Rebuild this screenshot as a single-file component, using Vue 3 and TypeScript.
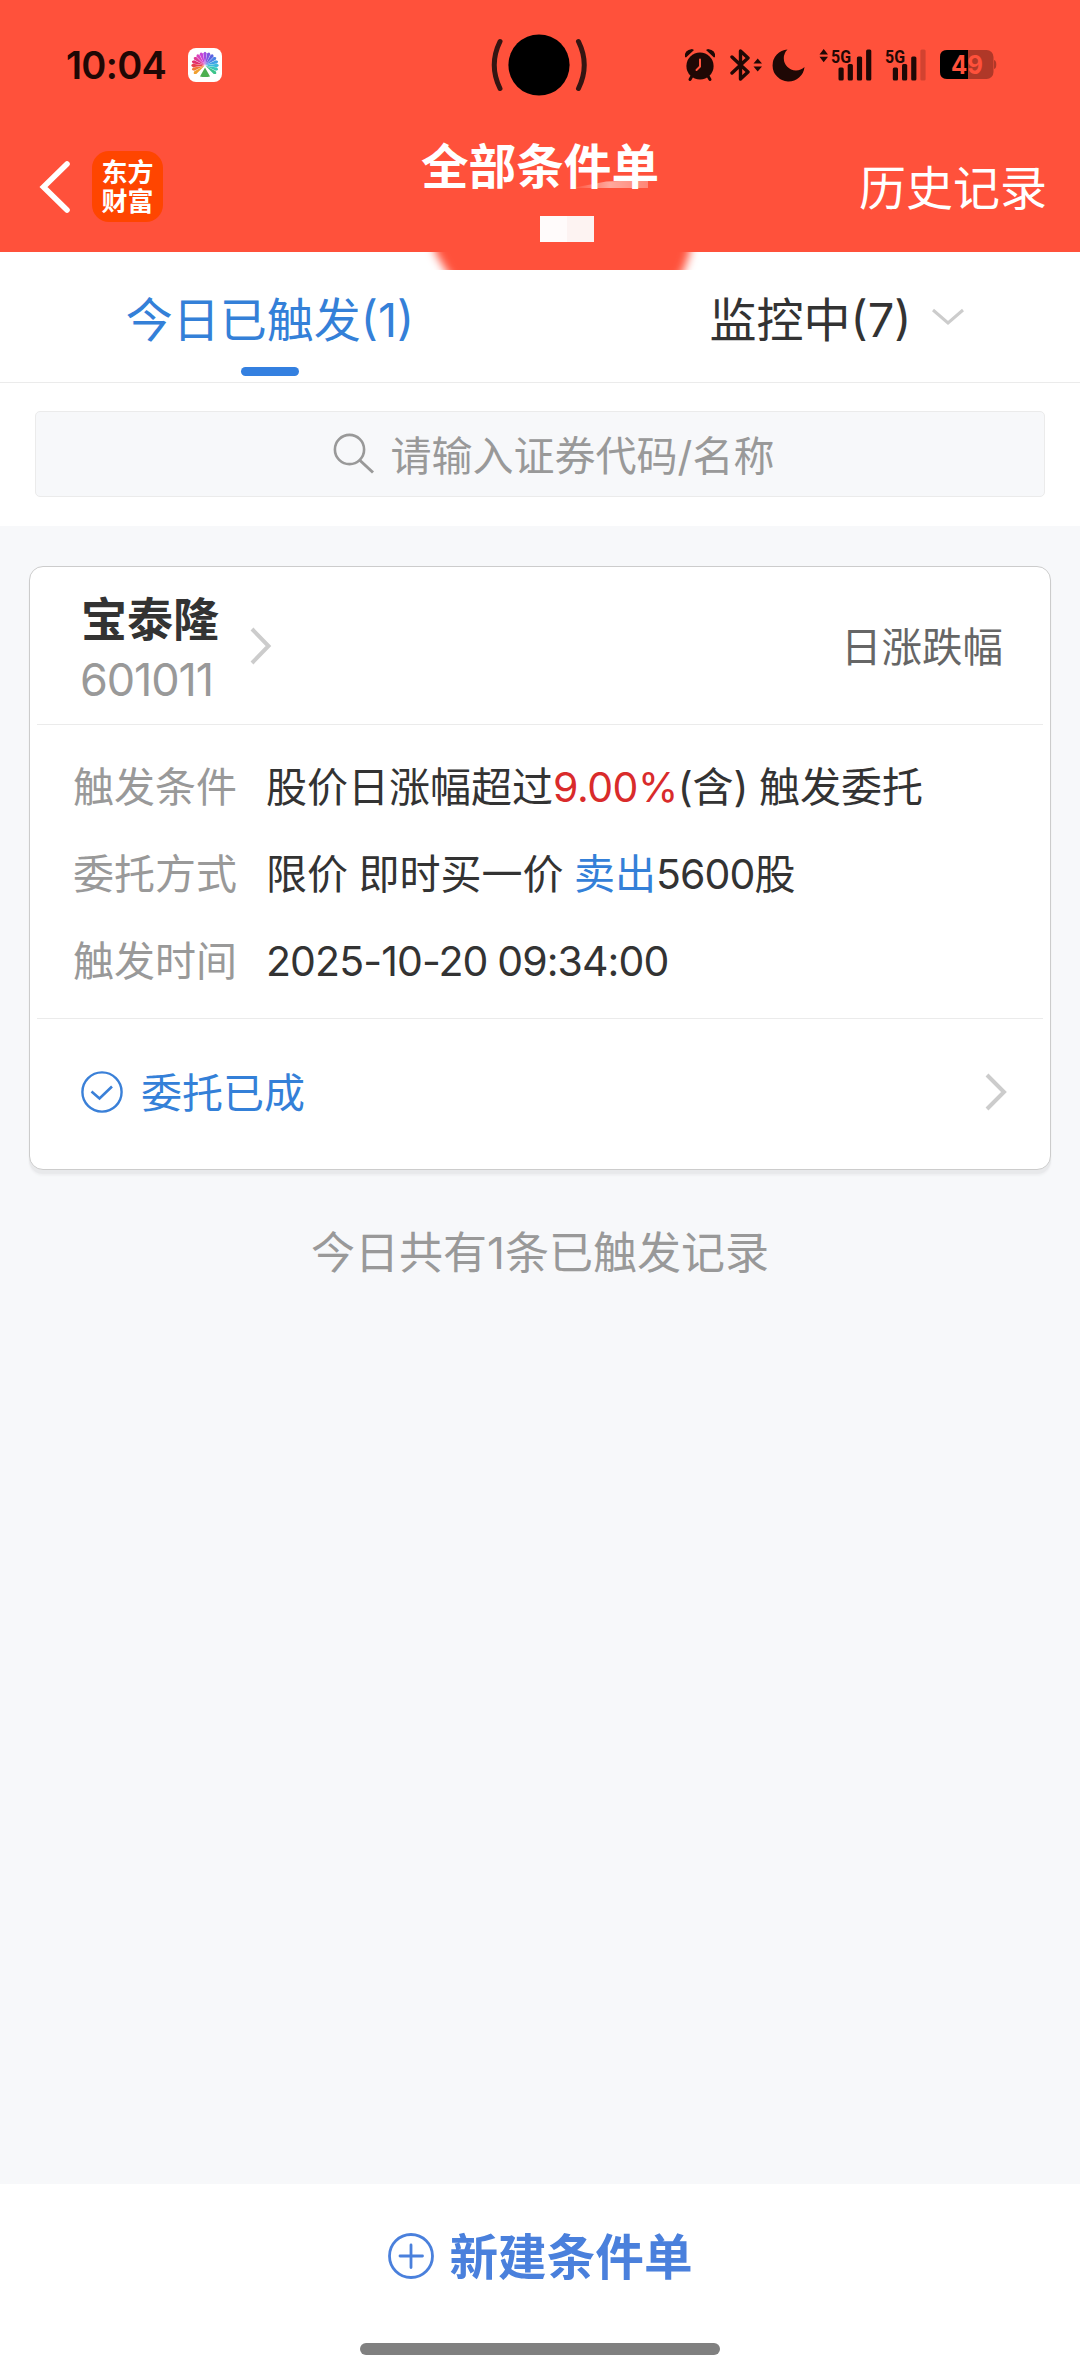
<script setup lang="ts">
interface Segment {
  text: string
  tone?: 'red' | 'blue' | 'num' | 'paren'
}
interface DetailRow {
  label: string
  segments: Segment[]
}

const rows: DetailRow[] = [
  {
    label: '触发条件',
    segments: [
      { text: '股价日涨幅超过' },
      { text: '9.00%', tone: 'red' },
      { text: '(含) 触发委托', tone: 'paren' },
    ],
  },
  {
    label: '委托方式',
    segments: [
      { text: '限价 即时买一价 ' },
      { text: '卖出', tone: 'blue' },
      { text: '5600', tone: 'num' },
      { text: '股' },
    ],
  },
  { label: '触发时间', segments: [{ text: '2025-10-20 09:34:00', tone: 'num' }] },
]

const petalColors = [
  '#f0a030', '#f07a38', '#e8404c', '#e0306c', '#dd3a96', '#d943bd', '#c744d6',
  '#a44be0', '#8054e0', '#5b62e0', '#4b84e6', '#3fa2e6', '#3bbcdc', '#38c8b8', '#3cc48a',
]
const petals = petalColors.map((color, i) => ({ color, angle: -126 + i * 18 }))

const signalBars = [
  { x: 0, y: 18.5 },
  { x: 9.2, y: 15 },
  { x: 18.4, y: 7.5 },
  { x: 27.6, y: 0.5 },
]
</script>

<template>
  <div class="screen">
    <header class="header">
      <div class="status">
        <span class="clock">10:04</span>
        <svg class="fan" width="34" height="34" viewBox="0 0 34 34">
          <rect width="34" height="34" rx="8" fill="#fff" />
          <path
            v-for="p in petals"
            :key="p.angle"
            d="M17 17 L15.3 5.500 Q17 2 18.700 5.500 Z"
            :fill="p.color"
            :transform="`rotate(${p.angle} 17 17.5)`"
          />
          <path d="M17 19.5 L22 28.5 Q17 29.6 12 28.5 Z" fill="#4caf50" />
        </svg>
        <svg class="camera" width="98" height="64" viewBox="0 0 98 64">
          <circle cx="49" cy="32" r="30.6" fill="#000" />
          <path d="M10 8.5 Q-1.5 32 10 55.5 M88.500 8.500 Q100 32 88.500 55.500" fill="none" stroke="#341512" stroke-width="5" stroke-linecap="round" />
        </svg>
        <div class="indicators">
          <svg class="alarm" width="32" height="34" viewBox="0 0 32 34">
            <circle cx="16" cy="18" r="13.6" fill="#1f0805" />
            <path d="M1 9 Q0 2 8 1 L10 2 L2 9.500 Z M31 9 Q32 2 24 1 L22 2 L30 9.500 Z" fill="#1f0805" />
            <path d="M8 28 L6 31.500 M24 28 L26 31.500" stroke="#1f0805" stroke-width="3" stroke-linecap="round" />
            <path d="M16 11.500 V18.500 L12.500 22" fill="none" stroke="#ff513b" stroke-width="2" stroke-linecap="round" />
          </svg>
          <svg class="bt" width="32" height="34" viewBox="0 0 32 34">
            <path d="M2 9 L18 24 L10.500 31 V3 L18 10 L2 25" fill="none" stroke="#1f0805" stroke-width="3.400" stroke-linejoin="round" stroke-linecap="round" />
            <path d="M23.500 15.500 L27.700 10.500 L32 15.500 Z M23.500 18.500 L27.700 23.500 L32 18.500 Z" fill="#1f0805" />
          </svg>
          <svg class="moon" width="34" height="34" viewBox="0 0 34 34">
            <path d="M15.500 1.500 A16 16 0 1 0 32.500 19 A12 12 0 0 1 15.500 1.500 Z" fill="#1f0805" />
          </svg>
          <svg class="sig1" width="54" height="46" viewBox="0 -6 54 46">
            <path d="M0.500 6.500 L4.700 1 L9 6.500 Z M0.500 8.800 L4.700 14.200 L9 8.800 Z" fill="#1f0805" />
            <text x="12" y="14.500" class="net" textLength="20" lengthAdjust="spacingAndGlyphs">5G</text>
            <rect v-for="b in signalBars" :key="b.x" :x="b.x + 19.500" :y="b.y + 1" width="5.200" :height="31.500 - b.y" rx="1.500" fill="#1f0805" />
          </svg>
          <svg class="sig2" width="44" height="46" viewBox="-2 -6 44 46">
            <text x="0" y="14.500" class="net" textLength="20" lengthAdjust="spacingAndGlyphs">5G</text>
            <rect v-for="(b, i) in signalBars" :key="b.x" :x="b.x + 7.800" :y="b.y + 1" width="5.200" :height="31.500 - b.y" rx="1.500" fill="#1f0805" :opacity="i === 3 ? 0.2 : 1" />
          </svg>
          <svg class="battery" width="57" height="30" viewBox="0 0 57 30">
            <rect x="0" y="0" width="53.500" height="29" rx="7" fill="#b03828" />
            <path d="M54 10 Q56.300 10.500 56.300 14.500 Q56.300 18.500 54 19 Z" fill="#b03828" />
            <path d="M7 0 H28 V29 H7 Q0 29 0 22 V7 Q0 0 7 0 Z" fill="#000" />
            <text x="11" y="24.200" class="pct" textLength="32" lengthAdjust="spacingAndGlyphs">49</text>
          </svg>
        </div>
      </div>

      <div class="nav">
        <svg class="back" width="34" height="56" viewBox="0 0 34 56">
          <path d="M29 5 L5.500 28 L29 51" fill="none" stroke="#fff" stroke-width="5.600" stroke-linecap="round" stroke-linejoin="miter" />
        </svg>
        <div class="brand"><span>东方</span><span>财富</span></div>
        <h1 class="title">全部条件单</h1>
        <span class="history">历史记录</span>
      </div>

      <div class="smear"></div>
      <div class="mask"><i></i><i></i></div>
      <div class="drip"><i></i></div>
    </header>

    <nav class="tabs">
      <div class="tab active">
        <span>今日已触发<b>(1)</b></span>
      </div>
      <div class="tab second">
        <span>监控中<b>(7)</b></span>
        <svg width="34" height="20" viewBox="0 0 34 20">
          <path d="M2 2 L17 15 L32 2" fill="none" stroke="#ccc" stroke-width="3" />
        </svg>
      </div>
    </nav>

    <div class="search-area">
      <div class="search">
        <svg width="44" height="44" viewBox="0 0 44 44">
          <circle cx="17.500" cy="17.500" r="14.600" fill="none" stroke="#999" stroke-width="2.600" />
          <path d="M27.500 28 L41 40.500" stroke="#999" stroke-width="3" />
        </svg>
        <span>请输入证券代码/名称</span>
      </div>
    </div>

    <main class="content">
      <section class="card">
        <div class="card-head">
          <div class="stock">
            <strong>宝泰隆</strong>
            <span>601011</span>
          </div>
          <svg class="chev" width="22" height="38" viewBox="0 0 22 38">
            <path d="M2 2 L18.500 19 L2 36" fill="none" stroke="#ccc" stroke-width="4" />
          </svg>
          <span class="kind">日涨跌幅</span>
        </div>
        <dl class="details">
          <div v-for="row in rows" :key="row.label" class="row">
            <dt>{{ row.label }}</dt>
            <dd><span v-for="(s, i) in row.segments" :key="i" :class="s.tone">{{ s.text }}</span></dd>
          </div>
        </dl>
        <div class="result">
          <svg width="42" height="42" viewBox="0 0 42 42">
            <circle cx="21" cy="21" r="19.600" fill="none" stroke="#3a80d8" stroke-width="2.400" />
            <path d="M10.500 20.500 L18.500 27.500 L31 15.500" fill="none" stroke="#3a80d8" stroke-width="2.600" />
          </svg>
          <span>委托已成</span>
          <svg class="go" width="22" height="38" viewBox="0 0 22 38">
            <path d="M2 2 L19 19 L2 36" fill="none" stroke="#ccc" stroke-width="4" />
          </svg>
        </div>
      </section>
      <p class="summary">今日共有<b>1</b>条已触发记录</p>
    </main>

    <footer class="bottom">
      <div class="create">
        <svg width="46" height="46" viewBox="0 0 46 46">
          <circle cx="23" cy="23" r="21.500" fill="none" stroke="#4a80dc" stroke-width="2.800" />
          <path d="M23 12 V34.500 M12 23 H34.500" stroke="#4a80dc" stroke-width="2.800" stroke-linecap="round" />
        </svg>
        <span>新建条件单</span>
      </div>
      <div class="home-bar"></div>
    </footer>
  </div>
</template>

<style>
body {
  margin: 0;
}
</style>

<style scoped>
.screen {
  width: 1080px;
  height: 2376px;
  display: flex;
  flex-direction: column;
  background: #f7f8fa;
  color: #333;
  font-family: Inter, "Noto Sans CJK SC", sans-serif;
  font-size: 41px;
  line-height: 60px;
  white-space: nowrap;
  overflow: hidden;
}
.screen svg {
  display: block;
  flex: none;
}
b {
  font-weight: 400;
}

/* header */
.header {
  position: relative;
  flex: none;
  height: 252px;
  background: #ff513b;
  color: #fff;
}
.status {
  position: relative;
  height: 130px;
  display: flex;
  align-items: center;
  box-sizing: border-box;
  padding: 0 83px 0 66px;
}
.clock {
  width: 122px;
  color: #1f0805;
  font-size: 38px;
  font-weight: 600;
  letter-spacing: -0.7px;
}
.camera {
  position: absolute;
  left: 490px;
  top: 33px;
}
.indicators {
  margin-left: auto;
  display: flex;
  align-items: center;
}
.bt { margin-left: 14px; }
.moon { margin-left: 10px; }
.sig1 { margin-left: 13px; }
.sig2 { margin-left: 10px; }
.battery { margin-left: 13px; }
.net {
  font: 700 19px Roboto, sans-serif;
  fill: #1f0805;
}
.pct {
  font: 700 26px Inter, sans-serif;
  fill: #ff513b;
}
.nav {
  position: relative;
  height: 114px;
  display: flex;
  align-items: center;
  box-sizing: border-box;
  padding: 0 33px 0 38px;
}
.brand {
  width: 71px;
  height: 71px;
  margin: -1px 0 0 20px;
  display: flex;
  flex-direction: column;
  align-items: center;
  justify-content: center;
  border-radius: 17px;
  background: #ff4500;
  font-size: 26px;
  font-weight: 700;
  line-height: 29px;
}
.title {
  position: absolute;
  left: 0;
  right: 0;
  top: 7px;
  margin: 0;
  text-align: center;
  font-size: 47.6px;
  font-weight: 700;
  pointer-events: none;
}
.history {
  margin: 2px 0 0 auto;
  font-size: 47px;
}
.smear {
  position: absolute;
  left: 572px;
  top: 180px;
  width: 76px;
  height: 8px;
  background: linear-gradient(to right, rgba(255, 255, 255, 0), rgba(255, 255, 255, 0.5) 50%, rgba(255, 255, 255, 0.3));
  clip-path: polygon(0 100%, 45% 20%, 100% 0, 100% 100%);
}
.mask {
  position: absolute;
  left: 540px;
  top: 216px;
  display: flex;
}
.mask i {
  width: 27px;
  height: 26px;
  background: #fdf3f2;
}
.mask i:first-child {
  background: #fffbfb;
}
.drip {
  position: absolute;
  left: 400px;
  top: 252px;
  width: 320px;
  height: 18px;
  overflow: hidden;
}
.drip i {
  position: absolute;
  left: 0;
  top: -40px;
  width: 320px;
  height: 80px;
  filter: blur(5px);
}
.drip i::before {
  content: "";
  display: block;
  height: 100%;
  background: #ff513b;
  clip-path: polygon(28px 0, 35px 40px, 47px 60px, 62px 80px, 268px 80px, 283px 60px, 290px 40px, 294px 0);
}

/* tabs */
.tabs {
  flex: none;
  display: flex;
  height: 130px;
  border-bottom: 1px solid #ebebeb;
  background: #fff;
  font-size: 47px;
}
.tab {
  position: relative;
  flex: none;
  width: 540px;
  display: flex;
  align-items: center;
  justify-content: center;
  padding-bottom: 1px;
  box-sizing: border-box;
  height: 136px;
}
.active {
  color: #3480d8;
}
.active::after {
  content: "";
  position: absolute;
  left: 241px;
  top: 115px;
  width: 58px;
  height: 9px;
  border-radius: 5px;
  background: #3480e0;
}
.second {
  gap: 20px;
  padding-left: 55px;
}
.second svg {
  margin-top: -3px;
}

/* search */
.search-area {
  flex: none;
  height: 143px;
  padding: 28px 35px 0;
  box-sizing: border-box;
  background: #fff;
}
.search {
  height: 86px;
  box-sizing: border-box;
  display: flex;
  align-items: center;
  justify-content: center;
  gap: 15px;
  padding-left: 26px;
  border: 1px solid #ebebeb;
  border-radius: 5px;
  background: #f7f8fa;
  color: #999;
}
.search span {
  padding-top: 3px;
}

/* card */
.content {
  flex: 1;
  padding: 40px 29px 0;
}
.card {
  height: 604px;
  box-sizing: border-box;
  border: 1px solid #ccc;
  border-radius: 14px;
  background: #fff;
  box-shadow: 0 4px 1px #e8e9eb, 0 6px 2px #f0f1f3;
}
.card-head {
  height: 157px;
  margin: 0 7px;
  padding: 0 40px 0 44px;
  display: flex;
  align-items: center;
  border-bottom: 1px solid #ebebeb;
}
.stock {
  width: 169px;
  padding-top: 7px;
  display: flex;
  flex-direction: column;
}
.stock strong {
  font-size: 46px;
  font-weight: 700;
}
.stock span {
  margin-left: -1px;
  color: #999;
  font-size: 45px;
  letter-spacing: -1.1px;
  line-height: 61px;
}
.kind {
  margin: 4px 0 0 auto;
  color: #666;
  font-size: 40.5px;
}
.details {
  height: 294px;
  margin: 0 7px;
  padding: 18px 0 0 36px;
  box-sizing: border-box;
  border-bottom: 1px solid #ebebeb;
}
.row {
  height: 87px;
  display: flex;
  align-items: center;
}
dt {
  width: 193px;
  color: #999;
}
dd {
  margin: 0;
  white-space: pre;
  word-spacing: -1px;
}
.red {
  color: #d92b2b;
  letter-spacing: -0.5px;
}
.blue {
  color: #3480d8;
}
.num {
  letter-spacing: -0.9px;
}
.result {
  display: flex;
  align-items: center;
  height: 145px;
  padding: 0 43px 0 51px;
  color: #3480d8;
}
.result span {
  margin: 3px 0 0 18px;
}
.go {
  margin-left: auto;
}
.summary {
  margin: 53px 0 0;
  text-align: center;
  color: #999;
  font-size: 44px;
}

/* bottom bar */
.bottom {
  flex: none;
  height: 192px;
  background: #fff;
}
.create {
  height: 144px;
  display: flex;
  align-items: center;
  justify-content: center;
  gap: 16px;
  color: #4a80dc;
  font-size: 48.600px;
  font-weight: 700;
}
.create span {
  padding-top: 3px;
}
.home-bar {
  width: 360px;
  height: 12px;
  margin: 15px auto 0;
  border-radius: 6px;
  background: #808080;
}
</style>
